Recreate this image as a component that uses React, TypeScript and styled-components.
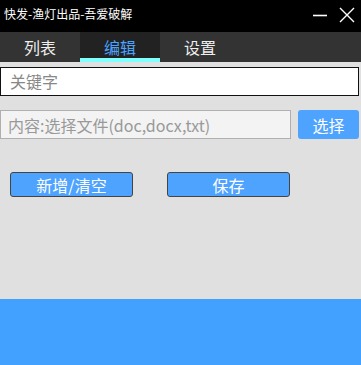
import styled, { createGlobalStyle } from "styled-components";

const Global = createGlobalStyle`
  html, body { margin: 0; padding: 0; }
  body { font-family: "Noto Sans CJK SC", "Noto Sans", sans-serif; }
  * { box-sizing: border-box; }
`;

const Window = styled.div`
  width: 361px;
  height: 365px;
  display: flex;
  flex-direction: column;
  background: #e0e0e0;
  overflow: hidden;
`;

const TitleBar = styled.div`
  height: 32px;
  background: #000;
  display: flex;
  align-items: center;
  padding: 0 6px 0 4px;
`;

const Title = styled.div`
  flex: 1;
  color: #fff;
  font-size: 12px;
  line-height: 1;
  margin-top: -4px;
`;

const Controls = styled.div`
  display: flex;
  align-items: center;
  gap: 11px;
  margin-top: -3px;
`;

const Tabs = styled.div`
  height: 30px;
  background: #333;
  display: flex;
`;

const Tab = styled.div<{ $active?: boolean }>`
  width: 80px;
  display: flex;
  align-items: center;
  justify-content: center;
  font-size: 16px;
  color: ${(p) => (p.$active ? "#4aa3ff" : "#eee")};
  background: ${(p) => (p.$active ? "#222" : "transparent")};
  border-bottom: 4px solid ${(p) => (p.$active ? "#80ffff" : "transparent")};
  padding-top: 3px;
`;

const Body = styled.div`
  flex: 1;
  padding: 5px 2px 0 0;
  display: flex;
  flex-direction: column;
`;

const KeywordInput = styled.div`
  height: 29px;
  background: #fff;
  border: 1.5px solid #111;
  display: flex;
  align-items: center;
  padding-left: 9px;
  padding-bottom: 2px;
  font-size: 16px;
  color: #888;
`;

const Row = styled.div`
  display: flex;
  gap: 7px;
  margin-top: 14px;
  height: 29px;
`;

const FileInput = styled.div`
  width: 291px;
  background: #f3f3f3;
  border: 1px solid #b0b0b0;
  display: flex;
  align-items: center;
  padding-left: 7px;
  font-size: 16px;
  color: #999;
`;

const PickButton = styled.div`
  flex: 1;
  background: #4ea3ff;
  border-radius: 3px;
  color: #fff;
  font-size: 16px;
  display: flex;
  align-items: center;
  justify-content: center;
`;

const Actions = styled.div`
  display: flex;
  gap: 34px;
  padding-left: 10px;
  margin-top: 33px;
`;

const ActionButton = styled.div`
  width: 123px;
  height: 25px;
  background: #4ea3ff;
  border: 1px solid #444;
  border-radius: 3px;
  color: #fff;
  font-size: 16px;
  display: flex;
  align-items: center;
  justify-content: center;
`;

const Footer = styled.div`
  height: 66px;
  background: #42a0ff;
`;

export default function App() {
  return (
    <>
      <Global />
      <Window>
        <TitleBar>
          <Title>快发-渔灯出品-吾爱破解</Title>
          <Controls>
            <svg width="16" height="16" viewBox="0 0 16 16">
              <path d="M1 8.5h14" stroke="#fff" strokeWidth="1.6" />
            </svg>
            <svg width="16" height="16" viewBox="0 0 16 16">
              <path d="M1 1L15 15M15 1L1 15" stroke="#fff" strokeWidth="1.4" />
            </svg>
          </Controls>
        </TitleBar>
        <Tabs>
          <Tab>列表</Tab>
          <Tab $active>编辑</Tab>
          <Tab>设置</Tab>
        </Tabs>
        <Body>
          <KeywordInput>关键字</KeywordInput>
          <Row>
            <FileInput>内容:选择文件(doc,docx,txt)</FileInput>
            <PickButton>选择</PickButton>
          </Row>
          <Actions>
            <ActionButton>新增/清空</ActionButton>
            <ActionButton>保存</ActionButton>
          </Actions>
        </Body>
        <Footer />
      </Window>
    </>
  );
}
